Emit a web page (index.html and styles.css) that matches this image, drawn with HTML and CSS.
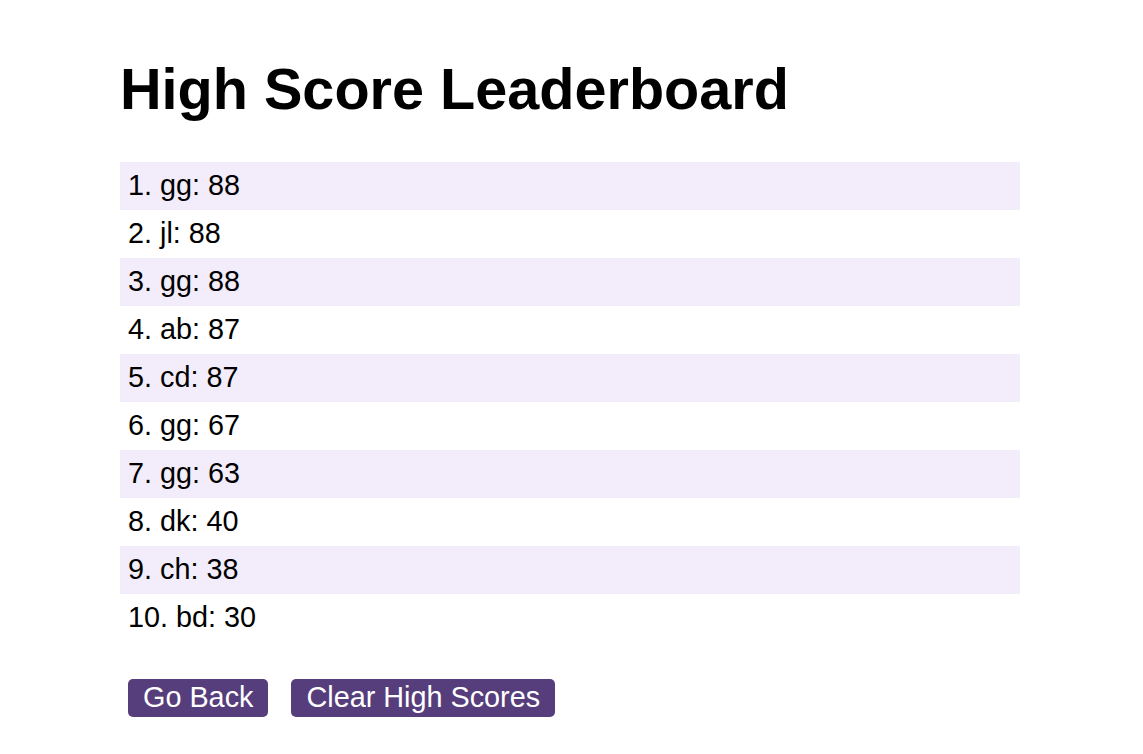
FILE: index.html
```html
<!DOCTYPE html>
<html lang="en">
<head>
<meta charset="utf-8">
<title>High Score Leaderboard</title>
<link rel="stylesheet" href="styles.css">
</head>
<body>
<main class="board">
  <h1 class="title">High Score Leaderboard</h1>
  <ol class="scores">
    <li class="score">1. gg: 88</li>
    <li class="score">2. jl: 88</li>
    <li class="score">3. gg: 88</li>
    <li class="score">4. ab: 87</li>
    <li class="score">5. cd: 87</li>
    <li class="score">6. gg: 67</li>
    <li class="score">7. gg: 63</li>
    <li class="score">8. dk: 40</li>
    <li class="score">9. ch: 38</li>
    <li class="score">10. bd: 30</li>
  </ol>
  <div class="actions">
    <button class="btn">Go Back</button>
    <button class="btn">Clear High Scores</button>
  </div>
</main>
</body>
</html>
```

FILE: styles.css
```css
html, body {
  margin: 0;
  padding: 0;
  background: #ffffff;
}

body {
  font-family: "Liberation Sans", Arial, sans-serif;
  color: #000000;
}

.board {
  width: 900px;
  padding: 56px 0 0 120px;
}

.title {
  margin: 0 0 40px 0;
  font-size: 57.6px;
  font-weight: bold;
  line-height: normal;
}

.scores {
  list-style: none;
  margin: 0;
  padding: 0;
}

.score {
  box-sizing: border-box;
  height: 48px;
  line-height: 46px;
  padding: 0 8px 2px;
  font-size: 28.8px;
}

.score:nth-child(odd) {
  background: #f3edfb;
}

.actions {
  display: flex;
  gap: 23px;
  padding-left: 8px;
  margin-top: 37px;
}

.btn {
  font-family: "Liberation Sans", Arial, sans-serif;
  font-size: 28.8px;
  line-height: normal;
  color: #ffffff;
  background: #563d7c;
  border: none;
  border-radius: 5px;
  padding: 2px 15px 3px;
  cursor: pointer;
}
```
